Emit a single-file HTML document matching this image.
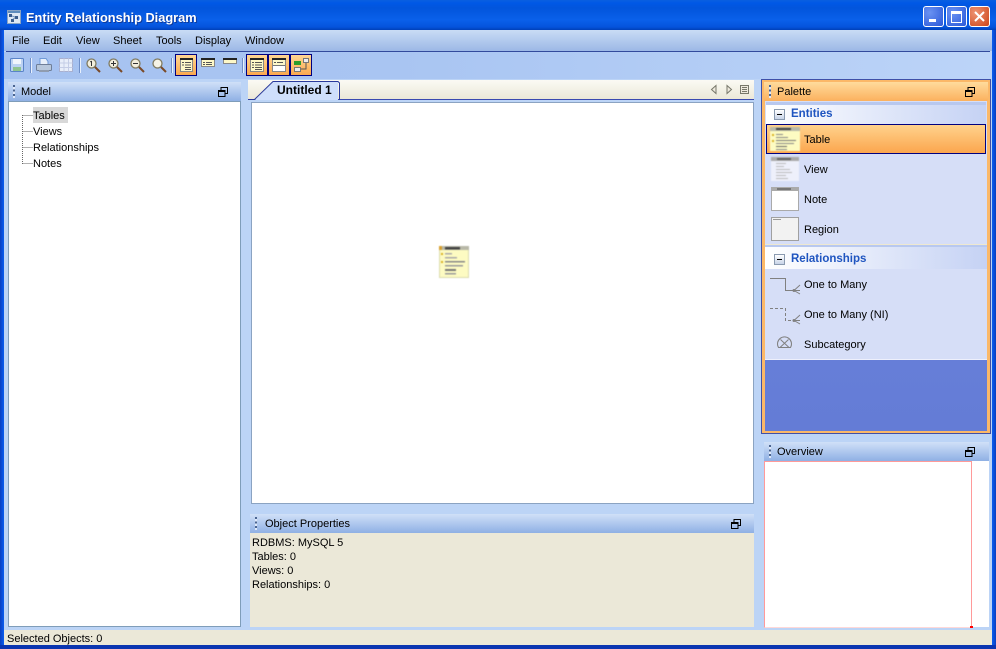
<!DOCTYPE html>
<html><head><meta charset="utf-8"><style>
html,body{margin:0;padding:0}
body{width:996px;height:649px;overflow:hidden;position:relative;background:#bcd4f6;font-family:"Liberation Sans",sans-serif;font-size:11px;color:#000}
.a,.t{position:absolute}
.t{white-space:nowrap;line-height:14px;margin-top:1px}
svg{position:absolute;overflow:visible}
.grip{position:absolute;left:5px;top:3px;width:2px;height:13px;background:repeating-linear-gradient(#4a6490 0 2px,#dfe9fa 2px 4.500px)}
.tb{position:absolute;top:54px;width:22px;height:22px;box-sizing:border-box;border:1px solid #000080;background:linear-gradient(#ffd693,#fba94f)}
.sep{position:absolute;top:58px;width:1px;height:15px;background:#6f8fc8;box-shadow:1px 0 0 #e8f0fc}
</style></head><body>
<!-- window frame -->
<div class="a" style="left:0;top:0;width:996px;height:30px;background:linear-gradient(#0a5fe0 0,#0058e6 3px,#0255dc 8px,#0a60ea 20px,#0553dc 27px,#0040b8 30px)"></div>
<div class="a" style="left:0;top:30px;width:4px;height:619px;background:linear-gradient(90deg,#0a3fc0,#0a5ef0)"></div>
<div class="a" style="left:992px;top:30px;width:4px;height:619px;background:linear-gradient(90deg,#0a5ef0,#0a3fc0)"></div>
<div class="a" style="left:0;top:645px;width:996px;height:4px;background:#0a35b0"></div>
<!-- title -->
<svg style="left:7px;top:10px" width="14" height="14" viewBox="0 0 14 14"><rect x=".5" y=".5" width="13" height="13" fill="#dfe8f4" stroke="#8aa4c4"/><rect x="1" y="1" width="12" height="2" fill="#5f8cbc"/><rect x="2" y="4" width="3" height="3" fill="#3a5c8c"/><rect x="8" y="6" width="3" height="3" fill="#3a5c8c"/><rect x="4" y="9" width="3" height="3" fill="#3a5c8c"/><path d="M5 6l3 1M6 9l2-1" stroke="#7a9ac0" fill="none"/></svg>
<div class="t" style="left:26px;top:10px;margin-top:0;color:#fff;font-weight:bold;font-size:12.800px;text-shadow:1px 1px 0 #0f3a9a;line-height:15px">Entity Relationship Diagram</div>
<!-- window buttons -->
<div class="a" style="left:923px;top:6px;width:19px;height:19px;border:1px solid #fff;border-radius:3px;background:radial-gradient(circle at 30% 30%,#6a92f2,#2a58d8)"><div class="a" style="left:5px;top:12px;width:7px;height:3px;background:#fff"></div></div>
<div class="a" style="left:946px;top:6px;width:19px;height:19px;border:1px solid #fff;border-radius:3px;background:radial-gradient(circle at 30% 30%,#6a92f2,#2a58d8)"><div class="a" style="left:4px;top:4px;width:9px;height:8px;border:1px solid #fff;border-top:3px solid #fff"></div></div>
<div class="a" style="left:969px;top:6px;width:19px;height:19px;border:1px solid #fff;border-radius:3px;background:radial-gradient(circle at 30% 30%,#ee9474,#cc4418)"><svg style="left:4px;top:4px" width="11" height="11"><path d="M1 1l9 9M10 1l-9 9" stroke="#fff" stroke-width="2"/></svg></div>
<!-- menu -->
<div class="a" style="left:4px;top:30px;width:988px;height:21px;background:linear-gradient(#c9dcf5,#9cb8e6)"></div>
<div class="a" style="left:6px;top:51px;width:984px;height:1px;background:#324a9c"></div>
<div class="t" style="left:12px;top:33px">File</div>
<div class="t" style="left:43px;top:33px">Edit</div>
<div class="t" style="left:76px;top:33px">View</div>
<div class="t" style="left:113px;top:33px">Sheet</div>
<div class="t" style="left:156px;top:33px">Tools</div>
<div class="t" style="left:195px;top:33px">Display</div>
<div class="t" style="left:245px;top:33px">Window</div>
<!-- toolbar -->
<div class="a" style="left:4px;top:52px;width:988px;height:27px;background:linear-gradient(90deg,#a6c2f0,#a9c5f2 40%,#bcd4f8)"></div>
<svg style="left:10px;top:58px" width="15" height="15"><rect x=".5" y=".5" width="13" height="13" rx="1" fill="#bcd2f2" stroke="#5a84c8"/><rect x="3" y="1" width="8" height="5" fill="#f0f5fc"/><rect x="3" y="9" width="8" height="4" fill="#8fc48f"/></svg>
<div class="sep" style="left:30px"></div>
<svg style="left:36px;top:58px" width="16" height="16"><path d="M4 .5h6l2 3v4H4z" fill="#e8f0fa" stroke="#6f9ad8"/><rect x=".5" y="6.500" width="15" height="6" rx="1" fill="#b8c8dc" stroke="#6f7f98"/><rect x="3" y="12" width="10" height="2" fill="#909caf"/></svg>
<svg style="left:59px;top:58px" width="15" height="15"><rect x=".5" y=".5" width="13" height="13" fill="#e8eefa" stroke="#a8b0d0"/><path d="M.5 5h13M.5 9.500h13M5 .5v13M9.500 .5v13" stroke="#c4cde6"/></svg>
<div class="sep" style="left:79px"></div>
<svg style="left:86px;top:58px" width="15" height="15"><circle cx="5.500" cy="5.500" r="4.500" fill="#f2eedd" stroke="#7f7a60" stroke-width="1.300"/><path d="M9 9l5 5" stroke="#7a4a28" stroke-width="2"/><path d="M5.500 3v5M4.300 4l1.200-1" stroke="#333" fill="none"/></svg>
<svg style="left:108px;top:58px" width="15" height="15"><circle cx="5.500" cy="5.500" r="4.500" fill="#f2eedd" stroke="#7f7a60" stroke-width="1.300"/><path d="M9 9l5 5" stroke="#7a4a28" stroke-width="2"/><path d="M3 5.500h5M5.500 3v5" stroke="#333"/></svg>
<svg style="left:130px;top:58px" width="15" height="15"><circle cx="5.500" cy="5.500" r="4.500" fill="#f2eedd" stroke="#7f7a60" stroke-width="1.300"/><path d="M9 9l5 5" stroke="#7a4a28" stroke-width="2"/><path d="M3 5.500h5" stroke="#333"/></svg>
<svg style="left:152px;top:58px" width="15" height="15"><circle cx="5.500" cy="5.500" r="4.500" fill="#f6f3e6" stroke="#7f7a60" stroke-width="1.300"/><path d="M9 9l5 5" stroke="#7a4a28" stroke-width="2"/></svg>
<div class="sep" style="left:171px"></div>
<div class="tb" style="left:175px"><svg style="left:4px;top:3px" width="13" height="14"><rect x=".5" y=".5" width="12" height="13" fill="#fdf8c8" stroke="#888"/><rect width="13" height="2" fill="#222"/><path d="M2 4.500h2M5 4.500h6M2 7h2M5 7h6M5 9.500h6M5 11.500h6" stroke="#555"/></svg></div>
<svg style="left:201px;top:58px" width="14" height="9"><rect x=".5" y=".5" width="13" height="8" fill="#fdf8c8" stroke="#888"/><rect width="14" height="2" fill="#222"/><path d="M2 4.500h2M5 4.500h6M2 6.500h2M5 6.500h6" stroke="#555"/></svg>
<svg style="left:223px;top:58px" width="14" height="6"><rect x=".5" y=".5" width="13" height="5" fill="#fdf8c8" stroke="#888"/><rect width="14" height="2" fill="#222"/></svg>
<div class="sep" style="left:242px"></div>
<div class="tb" style="left:246px"><svg style="left:3px;top:3px" width="14" height="14"><rect x=".5" y=".5" width="13" height="13" fill="#fdf8c8" stroke="#888"/><rect width="14" height="2" fill="#222"/><path d="M2 4.500h2M5 4.500h7M2 7h2M5 7h7M2 9.500h2M5 9.500h7M5 11.500h7" stroke="#555"/></svg></div>
<div class="tb" style="left:268px"><svg style="left:3px;top:3px" width="14" height="14"><rect x=".5" y=".5" width="13" height="13" fill="#fdf8c8" stroke="#888"/><rect width="14" height="2" fill="#222"/><rect x="1" y="8" width="12" height="5" fill="#fff"/><path d="M1 7.500h12" stroke="#777"/><path d="M2 4.500h2M5 4.500h6" stroke="#555"/></svg></div>
<div class="tb" style="left:290px"><svg style="left:3px;top:3px" width="16" height="15"><rect x="0" y="3" width="7" height="4" fill="#2c9c2c"/><rect x="9.500" y=".5" width="5" height="4" fill="#eee" stroke="#777"/><rect x=".5" y="9.500" width="6" height="4" fill="#eee" stroke="#777"/><path d="M12 5v6H7" stroke="#555" fill="none"/></svg></div>
<!-- Model panel -->
<div class="a" style="left:8px;top:82px;width:233px;height:19px;background:linear-gradient(#d0e0f8,#8fb0e4)"><div class="grip"></div><div class="t" style="left:13px;top:2px">Model</div><svg style="left:210px;top:5px" width="10" height="10"><path d="M.5 3.500h6.500v6H.5zM.5 4.500h6.500M3 3V.5h6.500v6H7" stroke="#000" fill="none"/></svg></div>
<div class="a" style="left:8px;top:101px;width:233px;height:526px;box-sizing:border-box;background:#fff;border:1px solid #7f9db9"></div>
<div class="a" style="left:33px;top:107px;width:35px;height:16px;background:#d8d8d8"></div>
<svg style="left:22px;top:115px" width="12" height="50" shape-rendering="crispEdges"><path d="M.5 0V49M.5 .5H11M.5 16.500H11M.5 32.500H11M.5 48.500H11" stroke="#666" stroke-dasharray="1 1" fill="none"/></svg>
<div class="t" style="left:33px;top:108px">Tables</div>
<div class="t" style="left:33px;top:124px">Views</div>
<div class="t" style="left:33px;top:140px">Relationships</div>
<div class="t" style="left:33px;top:156px">Notes</div>
<!-- Tab area -->
<div class="a" style="left:248px;top:80px;width:506px;height:19px;background:linear-gradient(#fbfaf4,#ebe8d8)"></div>
<div class="a" style="left:248px;top:99px;width:506px;height:1px;background:#3a4ab0"></div>
<div class="a" style="left:251px;top:102px;width:503px;height:402px;box-sizing:border-box;background:#fff;border:1px solid #8ba3c2"></div>
<svg style="left:248px;top:80px" width="94" height="21"><path d="M7 20L25 2h65v18z" fill="#cfdffb"/><path d="M0 19.500h6.500L25 1.500h65l1.500 1.500v17" fill="none" stroke="#2a3a9c"/></svg>
<div class="t" style="left:277px;top:82px;font-weight:bold;font-size:12px">Untitled 1</div>
<svg style="left:708px;top:85px" width="42" height="10"><path d="M8 .5L3.500 4.500 8 8.500z M19 .5l4.500 4-4.500 4z" fill="#eeeade" stroke="#77776a"/><rect x="32.500" y=".5" width="8" height="8" fill="#eeeade" stroke="#77776a"/><path d="M34 2.500h5M34 4.500h5M34 6.500h5" stroke="#77776a"/></svg>
<!-- tiny table on canvas -->
<svg style="left:439px;top:246px;filter:blur(.4px)" width="30" height="32"><rect x=".5" y=".5" width="29" height="31" fill="#fdfbc2" stroke="#dcdcb0"/><rect x="0" y="0" width="30" height="4" fill="#b8b8a8"/><rect x="6" y="1" width="15" height="2.500" fill="#444"/><rect x="0" y="0" width="3" height="4" fill="#d8a030"/><rect x="2" y="7" width="2" height="2" fill="#d8b020"/><rect x="6" y="7" width="7" height="1.500" fill="#aaa"/><rect x="6" y="11" width="12" height="1.500" fill="#aaa"/><rect x="2" y="15" width="2" height="2" fill="#d8b020"/><rect x="6" y="15" width="20" height="1.500" fill="#888"/><rect x="6" y="19" width="18" height="1.500" fill="#999"/><rect x="6" y="23" width="11" height="2" fill="#777"/><rect x="6" y="27" width="11" height="1.500" fill="#999"/></svg>
<!-- Object Properties -->
<div class="a" style="left:250px;top:514px;width:504px;height:19px;background:linear-gradient(#d0e0f8,#8fb0e4)"><div class="grip"></div><div class="t" style="left:15px;top:2px">Object Properties</div><svg style="left:481px;top:5px" width="10" height="10"><path d="M.5 3.500h6.500v6H.5zM.5 4.500h6.500M3 3V.5h6.500v6H7" stroke="#000" fill="none"/></svg></div>
<div class="a" style="left:250px;top:533px;width:504px;height:94px;background:#ebe8d8"></div>
<div class="t" style="left:252px;top:535px">RDBMS: MySQL 5</div>
<div class="t" style="left:252px;top:549px">Tables: 0</div>
<div class="t" style="left:252px;top:563px">Views: 0</div>
<div class="t" style="left:252px;top:577px">Relationships: 0</div>
<!-- Palette -->
<div class="a" style="left:761px;top:79px;width:230px;height:355px;box-sizing:border-box;border:1px solid #3f50a8;background:#fbb868"></div>
<div class="a" style="left:764px;top:82px;width:224px;height:19px;background:linear-gradient(#ffdb9c,#fbb15e)"><div class="grip"></div><div class="t" style="left:13px;top:2px">Palette</div><svg style="left:201px;top:5px" width="10" height="10"><path d="M.5 3.500h6.500v6H.5zM.5 4.500h6.500M3 3V.5h6.500v6H7" stroke="#000" fill="none"/></svg></div>
<div class="a" style="left:765px;top:101px;width:222px;height:330px;background:linear-gradient(#6d86de,#647cd6)"></div>
<div class="a" style="left:765px;top:101px;width:222px;height:259px;background:#d6def7"></div>
<!-- Entities header -->
<div class="a" style="left:766px;top:102px;width:220px;height:22px;background:linear-gradient(90deg,#fff,#c5d2f4);border-top:3px solid #b8c8ef;box-sizing:border-box"></div>
<div class="a" style="left:774px;top:109px;width:9px;height:9px;background:linear-gradient(#fff,#c8d4e8);border:1px solid #8a9ab0"><div class="a" style="left:2px;top:4px;width:5px;height:1px;background:#000"></div></div>
<div class="t" style="left:791px;top:106px;color:#1f55c0;font-weight:bold;font-size:11.500px">Entities</div>
<!-- selected Table -->
<div class="a" style="left:766px;top:124px;width:220px;height:30px;box-sizing:border-box;border:1px solid #000080;background:linear-gradient(#ffd28c,#fba64e)"></div>
<svg style="left:770px;top:127px;filter:blur(.4px)" width="30" height="24"><rect width="30" height="24" fill="#fdfbc2"/><rect width="30" height="4" fill="#b8b8a8"/><rect x="6" y="1" width="15" height="2" fill="#444"/><rect x="2" y="7" width="2" height="2" fill="#d8b020"/><rect x="6" y="7" width="7" height="1" fill="#888"/><rect x="6" y="10" width="12" height="1" fill="#888"/><rect x="2" y="13" width="2" height="2" fill="#d8b020"/><rect x="6" y="13" width="20" height="1" fill="#777"/><rect x="6" y="16" width="18" height="1" fill="#888"/><rect x="6" y="19" width="11" height="1" fill="#666"/><rect x="6" y="22" width="11" height="1" fill="#888"/></svg>
<div class="t" style="left:804px;top:132px">Table</div>
<svg style="left:771px;top:157px;filter:blur(.4px)" width="28" height="24"><rect width="28" height="24" fill="#eef0fb"/><rect width="28" height="4" fill="#aaa"/><rect x="6" y="1" width="14" height="2" fill="#666"/><path d="M5 6.500h10M5 9.500h8M5 12.500h14M5 15.500h16M5 18.500h10M5 21.500h12" stroke="#bbb"/></svg>
<div class="t" style="left:804px;top:162px">View</div>
<svg style="left:771px;top:187px" width="28" height="24"><rect x=".5" y=".5" width="27" height="23" fill="#fff" stroke="#aaa"/><rect width="28" height="4" fill="#aaa"/><rect x="6" y="1" width="14" height="2" fill="#777"/></svg>
<div class="t" style="left:804px;top:192px">Note</div>
<svg style="left:771px;top:217px" width="28" height="24"><rect x=".5" y=".5" width="27" height="23" fill="#f2f2f2" stroke="#a0a0a0"/><path d="M2 2.500h8" stroke="#999"/></svg>
<div class="t" style="left:804px;top:222px">Region</div>
<!-- Relationships -->
<div class="a" style="left:765px;top:244px;width:222px;height:1px;background:#eee8d0"></div>
<div class="a" style="left:765px;top:245px;width:222px;height:2px;background:#b8c8ef"></div>
<div class="a" style="left:765px;top:247px;width:222px;height:22px;background:linear-gradient(90deg,#fff,#c5d2f4)"></div>
<div class="a" style="left:774px;top:254px;width:9px;height:9px;background:linear-gradient(#fff,#c8d4e8);border:1px solid #8a9ab0"><div class="a" style="left:2px;top:4px;width:5px;height:1px;background:#000"></div></div>
<div class="t" style="left:791px;top:251px;color:#1f55c0;font-weight:bold;font-size:11.500px">Relationships</div>
<svg style="left:770px;top:278px" width="30" height="17"><path d="M0 .5h15.500v12h9M24 12.500L30 7M24 12.500h6M24 12.500L30 16" stroke="#808080" fill="none"/><circle cx="24" cy="12.500" r="1.500" fill="#808080"/></svg>
<div class="t" style="left:804px;top:277px">One to Many</div>
<svg style="left:770px;top:308px" width="30" height="17"><path d="M0 .5h15.500v12h8" stroke="#808080" fill="none" stroke-dasharray="3 2"/><path d="M24 12.500L30 7M24 12.500h6M24 12.500L30 16" stroke="#808080" fill="none"/><circle cx="24" cy="12.500" r="1.500" fill="#808080"/></svg>
<div class="t" style="left:804px;top:307px">One to Many (NI)</div>
<svg style="left:777px;top:337px" width="16" height="12"><path d="M1.500 10.500A7 7 0 1 1 13.500 10.500ZM3.500 2.500L12 10.500M11.500 2.500L3 10.500" stroke="#808080" fill="none"/></svg>
<div class="t" style="left:804px;top:337px">Subcategory</div>
<div class="a" style="left:765px;top:359px;width:222px;height:1px;background:#eef0fc"></div>
<!-- Overview -->
<div class="a" style="left:764px;top:442px;width:225px;height:19px;background:linear-gradient(#d0e0f8,#8fb0e4)"><div class="grip"></div><div class="t" style="left:13px;top:2px">Overview</div><svg style="left:201px;top:5px" width="10" height="10"><path d="M.5 3.500h6.500v6H.5zM.5 4.500h6.500M3 3V.5h6.500v6H7" stroke="#000" fill="none"/></svg></div>
<div class="a" style="left:764px;top:461px;width:225px;height:166px;background:#fff"></div>
<div class="a" style="left:764px;top:461px;width:208px;height:167px;box-sizing:border-box;border:1px solid #ff9a9a;border-bottom-color:#ffd8d8"></div>
<div class="a" style="left:970px;top:626px;width:3px;height:2px;background:#f00"></div>
<!-- Status bar -->
<div class="a" style="left:4px;top:630px;width:988px;height:15px;background:#ebe8d8"></div>
<div class="t" style="left:7px;top:631px">Selected Objects: 0</div>
</body></html>
